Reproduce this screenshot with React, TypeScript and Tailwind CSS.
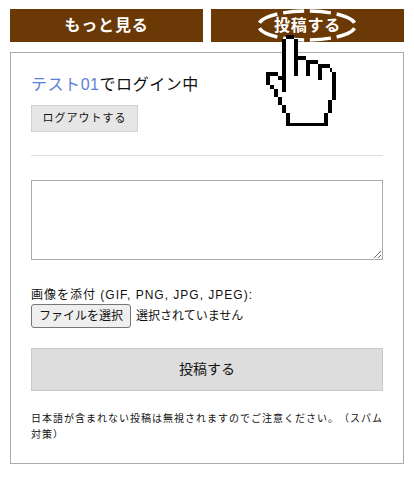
const JP = "font-['Liberation_Sans','Noto_Sans_CJK_JP',sans-serif]";

function Hand() {
  return (
    <svg className="absolute left-[264px] top-[34px]" width="74" height="94" viewBox="264 34 74 94" shapeRendering="crispEdges">
      <path fill="#fff" d="M286 35h8v21h12v4h12v4h12v8h2v28h-4v13h-4v13h-38v-13h-4v-8h-4v-8h-4v-8h-4v-4h-4v-10h12v4h4v-4h4z" />
      <path fill="#000" d="M286 35h8v4h-8zM282 39h4v53h-4zM294 39h4v37h-4zM298 56h8v4h-8zM306 60h4v16h-4zM310 60h8v4h-8zM318 64h4v16h-4zM322 64h8v4h-8zM330 68h2v4h-2zM332 72h4v28h-4zM328 100h4v13h-4zM324 113h4v13h-4zM286 123h38v3h-38zM286 113h4v10h-4zM282 105h4v8h-4zM278 97h4v8h-4zM274 89h4v8h-4zM270 85h4v4h-4zM266 75h4v10h-4zM266 72h12v4h-12zM278 76h4v4h-4z" />
    </svg>
  );
}

export default function App() {
  return (
    <div className={`relative w-[414px] h-[494px] bg-white overflow-hidden ${JP} text-[#111] [text-spacing-trim:space-all]`}>
      <div className="flex gap-2 pt-[9px] px-[10px]">
        <div className="flex-1 h-[33px] bg-[#6a3906] text-white font-bold text-[16px] flex items-center justify-center tracking-[0.8px]">もっと見る</div>
        <div className="flex-1 h-[33px] bg-[#6a3906] text-white font-bold text-[16px] flex items-center justify-center tracking-[0.8px]">投稿する</div>
      </div>
      <div className="mt-[10px] mx-[10px] h-[412px] border border-[#aaa] px-5 pt-5">
        <div className="text-[16px] leading-[24px] tracking-[0.55px]"><span className="text-[#5b7fd6]">テスト01</span>でログイン中</div>
        <div className="mt-[8px] w-[107px] h-[27px] bg-[#e6e6e6] border border-[#d0d0d0] flex items-center justify-center text-[11px] tracking-[1px]">ログアウトする</div>
        <div className="mt-[23px] h-px bg-[#ddd]" />
        <textarea className="block mt-[24px] w-full h-[80px] border border-[#aaa]" />
        <div className="mt-[27px] text-[12px] leading-[17px] tracking-[1px]">画像を添付 (GIF, PNG, JPG, JPEG):</div>
        <div className="flex items-center gap-[5px] text-[12px]">
          <div className="w-[100px] h-[24px] bg-[#efefef] border border-[#767676] rounded-[3px] flex items-center justify-center text-[#111] text-[12px]">ファイルを選択</div>
          <span>選択されていません</span>
        </div>
        <div className="mt-[20px] h-[43px] bg-[#ddd] border border-[#c8c8c8] flex items-center justify-center text-[14px]">投稿する</div>
        <p className="mt-[20px] text-[10px] leading-[16px] tracking-[1px]">日本語が含まれない投稿は無視されますのでご注意ください。（スパム対策）</p>
      </div>
      <svg className="absolute left-[256px] top-[9px]" width="102" height="33" viewBox="0 0 102 33" fill="none">
        <ellipse cx="51" cy="16.5" rx="48.5" ry="14.5" stroke="#fff" strokeWidth="3.5" pathLength="80" strokeDasharray="7.8 2.2" strokeDashoffset="-1.1" />
      </svg>
      <Hand />
    </div>
  );
}
